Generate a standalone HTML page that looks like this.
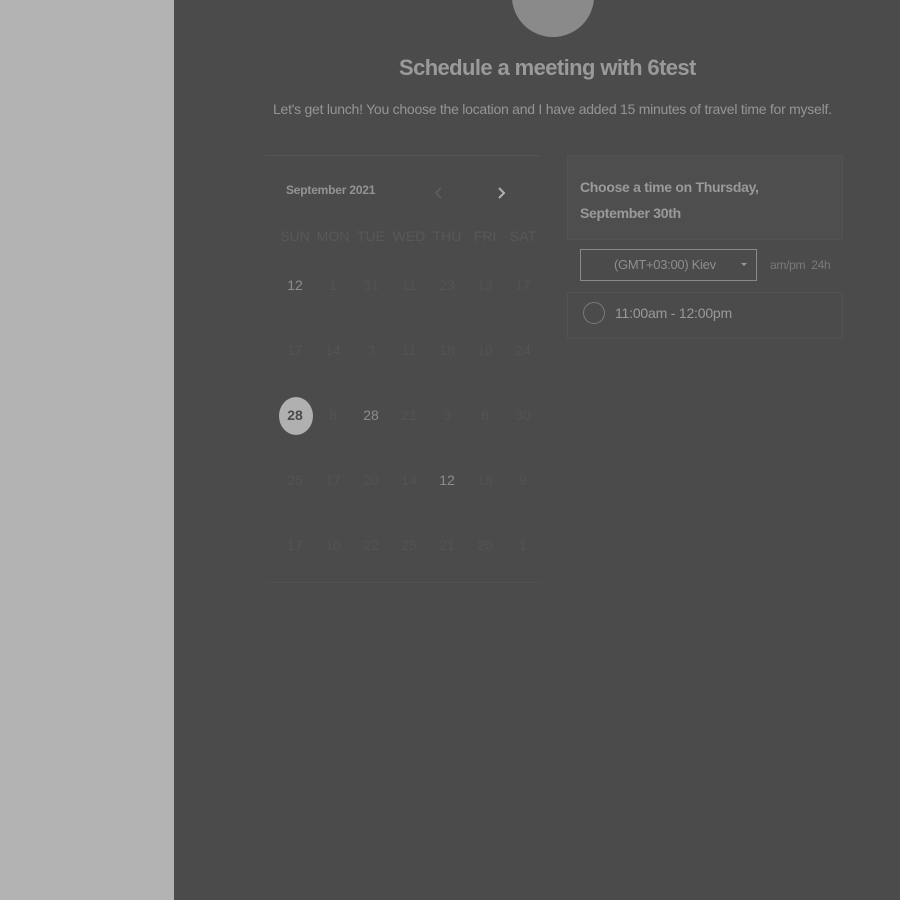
<!DOCTYPE html>
<html><head><meta charset="utf-8"><style>
body{margin:0;width:900px;height:900px;background:#4b4b4b;font-family:"Liberation Sans",sans-serif;position:relative;overflow:hidden}
.l{position:absolute;left:0;top:0;width:174px;height:900px;background:#b3b3b3}
.a{position:absolute;left:512px;top:-44px;width:82px;height:81px;border-radius:50%;background:#8a8a8a}
.ab{position:absolute;white-space:nowrap}
.n{position:absolute;width:38px;text-align:center;font-size:14px;color:#575757;transform:translate(-19px,-9px)}
.h{position:absolute;width:38px;text-align:center;font-size:14px;color:#585858;transform:translate(-19px,-9px)}
</style></head><body>
<div class="l"></div>
<div class="a"></div>
<div class="ab" style="left:399px;top:55px;font-size:22px;font-weight:bold;color:#9a9a9a;letter-spacing:-0.6px">Schedule a meeting with 6test</div>
<div class="ab" style="left:273px;top:101px;font-size:14px;color:#959595;letter-spacing:-0.25px">Let's get lunch! You choose the location and I have added 15 minutes of travel time for myself.</div>
<div class="ab" style="left:265px;top:155px;width:275px;height:1px;background:#555"></div>
<div class="ab" style="left:265px;top:582px;width:275px;height:1px;background:#505050"></div>
<div class="ab" style="left:286px;top:183px;font-size:12px;font-weight:bold;color:#939393;letter-spacing:-0.2px">September 2021</div>
<svg class="ab" style="left:434px;top:186px" width="10" height="14"><path d="M7 2L2 7L7 12" stroke="#5e5e5e" stroke-width="1.5" fill="none"/></svg>
<svg class="ab" style="left:497px;top:186px" width="10" height="14"><path d="M2 2L7 7L2 12" stroke="#b0b0b0" stroke-width="2" fill="none"/></svg>
<div class="ab" style="left:279px;top:397px;width:34px;height:38px;border-radius:50%;background:#b0b0b0"></div>
<div id="cal"></div>
<div class="ab" style="left:567px;top:155px;width:276px;height:85px;background:#4e4e4e;border:1px solid #525252;box-sizing:border-box"></div>
<div class="ab" style="left:580px;top:174px;font-size:14px;font-weight:bold;color:#9a9a9a;line-height:26px;letter-spacing:-0.3px">Choose a time on Thursday,<br>September 30th</div>
<div class="ab" style="left:580px;top:249px;width:177px;height:32px;border:1px solid #8a8a8a;box-sizing:border-box"></div>
<div class="ab" style="left:614px;top:257px;font-size:13px;color:#8e8e8e;letter-spacing:-0.3px">(GMT+03:00) Kiev</div>
<div class="ab" style="left:741px;top:263px;width:0;height:0;border-left:3px solid transparent;border-right:3px solid transparent;border-top:3px solid #999"></div>
<div class="ab" style="left:770px;top:258px;font-size:12px;color:#7a7a7a;letter-spacing:-0.3px">am/pm&nbsp; 24h</div>
<div class="ab" style="left:567px;top:292px;width:276px;height:47px;border:1px solid #525252;box-sizing:border-box"></div>
<div class="ab" style="left:583px;top:302px;width:20px;height:20px;border:1px solid #7a7a7a;border-radius:50%"></div>
<div class="ab" style="left:615px;top:305px;font-size:14px;color:#999;letter-spacing:-0.2px">11:00am - 12:00pm</div>
<script>
var xs=[295,333,371,409,447,485,523],ys=[286,351,416,481,546];
var d=[["12","1","31","11","23","13","17"],["17","14","3","11","18","10","24"],["28","8","28","21","3","6","30"],["25","17","20","14","12","18","9"],["17","10","22","25","21","20","1"]];
var hd=["SUN","MON","TUE","WED","THU","FRI","SAT"],s="";
hd.forEach(function(h,i){s+='<div class="h" style="left:'+xs[i]+'px;top:237px">'+h+'</div>'});
d.forEach(function(r,j){r.forEach(function(v,i){var c="#535353";
if((j==0&&i==0)||(j==2&&i==2)||(j==3&&i==4))c="#8c8c8c";
var st="";if(j==2&&i==0){c="#4a4a4a";st="font-weight:bold;"}
s+='<div class="n" style="left:'+xs[i]+'px;top:'+ys[j]+'px;color:'+c+';'+st+'">'+v+'</div>'})});
document.getElementById("cal").innerHTML=s;
</script>
</body></html>
